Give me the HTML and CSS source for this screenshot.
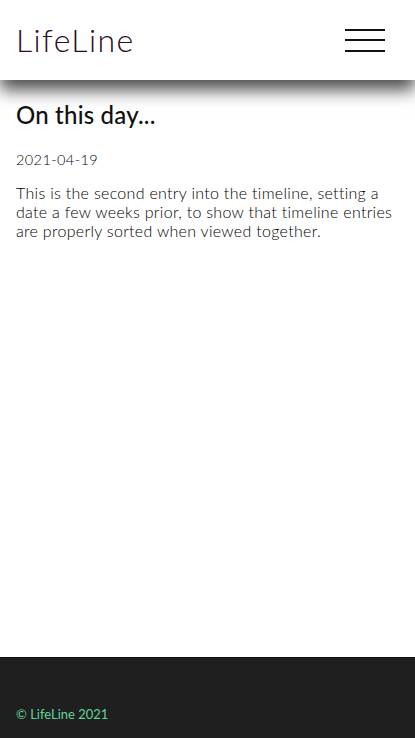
FILE: index.html
```html
<!DOCTYPE html>
<html lang="en">
<head>
<meta charset="utf-8">
<title>LifeLine</title>
<link rel="stylesheet" href="styles.css">
</head>
<body>
<div class="page">
  <header class="topbar">
    <div class="logo">LifeLine</div>
    <button class="menu" aria-label="Menu">
      <span class="bar"></span><span class="bar"></span><span class="bar"></span>
    </button>
  </header>
  <main class="content">
    <h1 class="title">On this day...</h1>
    <p class="date">2021-04-19</p>
    <p class="entry">This is the second entry into the timeline, setting a date a few weeks prior, to show that timeline entries are properly sorted when viewed together.</p>
  </main>
  <footer class="footer">
    <span class="copy">© LifeLine 2021</span>
  </footer>
</div>
</body>
</html>
```
FILE: styles.css
```css
* { box-sizing: border-box; }
html, body { margin: 0; padding: 0; height: 100%; }
body {
  font-family: Lato, "Open Sans", sans-serif;
  color: #111;
  background: #fff;
}
.page {
  min-height: 100vh;
  display: flex;
  flex-direction: column;
}
.topbar {
  height: 80px;
  background: #fff;
  display: flex;
  align-items: center;
  justify-content: space-between;
  padding: 0 30px 0 16px;
  box-shadow: 0 10px 16px rgba(0,0,0,0.7);
  position: relative;
  z-index: 2;
}
.logo {
  font-size: 32px;
  font-weight: 300;
  color: #2b0a2b;
  letter-spacing: 1.4px;
  margin-top: -2px;
}
.menu {
  width: 40px;
  height: 23px;
  padding: 0;
  border: 0;
  background: transparent;
  display: flex;
  flex-direction: column;
  justify-content: space-between;
}
.bar {
  display: block;
  height: 2px;
  width: 40px;
  background: #111;
}
.content {
  flex: 1;
  padding: 20px 16px;
}
.title {
  margin: 0 0 22px;
  font-size: 24px;
  font-weight: 500;
  letter-spacing: 0.2px;
}
.date {
  margin: 0 0 15px;
  font-size: 14.5px;
  font-weight: 300;
  letter-spacing: 0.4px;
  color: #000;
}
.entry {
  margin: 0;
  font-size: 16px;
  line-height: 19px;
  font-weight: 300;
  letter-spacing: 0.3px;
  color: #000;
}
.footer {
  height: 81px;
  background: #1f1f1f;
  border-top: 1px solid #111;
  display: flex;
  align-items: flex-end;
  padding: 0 16px 16px;
}
.copy {
  color: #5fd49b;
  font-size: 13px;
}
```
